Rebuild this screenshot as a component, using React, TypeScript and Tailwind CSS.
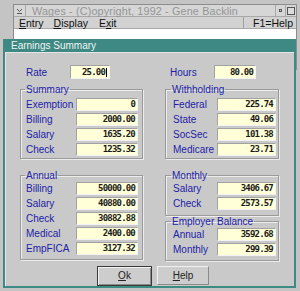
import React from "react";

const sans = "font-['Liberation_Sans',Arial,sans-serif]";
const lbl = "text-[10px] leading-[13px] text-[#2222a8]";

function Value({ value, w, h = 13, cursor = false }: { value: string; w: number; h?: number; cursor?: boolean }) {
  return (
    <div
      className="flex items-center justify-end bg-[#ffffd8] border border-t-[#a2a2a2] border-l-[#a2a2a2] border-b-[#f2f2f2] border-r-[#f2f2f2] pr-[2px] font-['DejaVu_Sans_Mono',monospace] font-bold text-[9px] tracking-[-0.8px] text-[#1a1a1a]"
      style={{ width: w, height: h }}
    >
      <span className="leading-none">{value}</span>
      {cursor && <span className="ml-[1px] h-[9px] w-[1px] bg-black" />}
    </div>
  );
}

function Row({ label, value, lw, iw, pl }: { label: string; value: string; lw: number; iw: number; pl: number }) {
  return (
    <div className="flex items-center h-[13px]">
      <div className={lbl} style={{ width: lw, paddingLeft: pl }}>{label}</div>
      <Value value={value} w={iw} />
    </div>
  );
}

function Group({
  title, rows, side, pt, pb, className = "",
}: {
  title: string; rows: [string, string][]; side: "l" | "r"; pt: number; pb: number; className?: string;
}) {
  const left = side === "l";
  return (
    <fieldset
      className={`border border-[#9a9a9a] shadow-[inset_1px_1px_0_#ececec,1px_1px_0_#ececec] ${className}`}
      style={{ paddingTop: pt, paddingBottom: pb }}
    >
      <legend className={`${lbl} leading-[12px] px-[1px] ${left ? "ml-[4px]" : "ml-[5px]"}`}>{title}</legend>
      <div className="flex flex-col gap-[2px]">
        {rows.map(([l, v]) => (
          <Row key={l} label={l} value={v} lw={left ? 55 : 51} iw={left ? 62 : 59} pl={left ? 5 : 7} />
        ))}
      </div>
    </fieldset>
  );
}

export default function App() {
  return (
    <div className={`relative w-[300px] h-[291px] overflow-hidden bg-[#c4c4c4] ${sans}`}>
      {/* Wages main window */}
      <div className="ml-[13px] mt-[4px] w-[284px] border border-[#8c8c8c] bg-[#d0d0d0]">
        <div className="flex items-center h-[12px] bg-[#d6d6d6] border-b border-[#a8a8a8]">
          <div className="w-[12px] h-full flex items-center justify-center border-r border-[#a8a8a8]">
            <svg width="7" height="6" viewBox="0 0 7 6">
              <path d="M1 1 L3.5 3.5 L6 1" fill="none" stroke="#555" strokeWidth="1" />
              <path d="M1 5.5 H6" stroke="#555" strokeWidth="1" />
            </svg>
          </div>
          <div className="ml-[6px] text-[10.8px] leading-[12px] tracking-[0.15px] text-[#959595] whitespace-nowrap">
            Wages - (C)opyright, 1992 - Gene Backlin
          </div>
          <div className="ml-auto h-full flex">
            <div className="w-[10px] h-full border-l border-[#a8a8a8] flex items-center justify-center">
              <div className="w-[3px] h-[3px] border border-[#555]" />
            </div>
            <div className="w-[11px] h-full border-l border-[#a8a8a8] flex items-center justify-center">
              <div className="w-[8px] h-[8px] border border-[#555] bg-[#dcdcdc]" />
            </div>
          </div>
        </div>
        <div className="flex items-center h-[12px] text-[10.5px] leading-[12px] text-[#111] bg-[#d2d2d2] border-b border-[#a8a8a8]">
          <span className="ml-[5px]"><u>E</u>ntry</span>
          <span className="ml-[10px]"><u>D</u>isplay</span>
          <span className="ml-[11px]">E<u>x</u>it</span>
          <div className="ml-auto h-full border-l border-[#a0a0a0] pl-[9px] pr-[3px]">F1=Help</div>
        </div>
        <div className="h-[40px] bg-white" />
      </div>

      {/* Earnings Summary dialog */}
      <div className="absolute left-[3px] top-[39px] w-[293px] h-[249px] bg-[#3e8983] px-[2px] pb-[2px] flex flex-col">
        <div className="h-[13px] flex items-center pl-[6px] text-[10px] leading-[13px] text-[#eef4f3] whitespace-nowrap">
          Earnings Summary
        </div>
        <div className="flex-1 bg-[#c9c9c9] border-l border-t border-[#e6e6e6] flex flex-col pl-[14px] pt-[12px]">
          <div className="flex gap-[22px]">
            {/* left column */}
            <div className="w-[123px] flex flex-col">
              <div className="flex items-center h-[14px]">
                <div className={`${lbl} w-[50px] pl-[6px]`}>Rate</div>
                <Value value="25.00" w={40} h={14} cursor />
              </div>
              <Group
                title="Summary" side="l" pt={2} pb={2} className="mt-[4px]"
                rows={[["Exemption", "0"], ["Billing", "2000.00"], ["Salary", "1635.20"], ["Check", "1235.32"]]}
              />
              <Group
                title="Annual" side="l" pt={0} pb={4} className="mt-[10px]"
                rows={[["Billing", "50000.00"], ["Salary", "40880.00"], ["Check", "30882.88"], ["Medical", "2400.00"], ["EmpFICA", "3127.32"]]}
              />
            </div>
            {/* right column */}
            <div className="w-[114px] flex flex-col">
              <div className="flex items-center h-[14px]">
                <div className={`${lbl} w-[49px] pl-[5px]`}>Hours</div>
                <Value value="80.00" w={42} h={14} />
              </div>
              <Group
                title="Withholding" side="r" pt={2} pb={2} className="mt-[4px]"
                rows={[["Federal", "225.74"], ["State", "49.06"], ["SocSec", "101.38"], ["Medicare", "23.71"]]}
              />
              <Group
                title="Monthly" side="r" pt={0} pb={5} className="mt-[10px]"
                rows={[["Salary", "3406.67"], ["Check", "2573.57"]]}
              />
              <Group
                title="Employer Balance" side="r" pt={0} pb={4} className="-mt-[1px]"
                rows={[["Annual", "3592.68"], ["Monthly", "299.39"]]}
              />
            </div>
          </div>
          <div className="flex items-start mt-[5px] ml-[77px] gap-[5px] text-[10px] text-[#222]">
            <button className="w-[55px] h-[20px] border border-[#3a3a3a] bg-[#cdcdcd] shadow-[inset_1px_1px_0_#f2f2f2,inset_-1px_-1px_0_#8a8a8a] flex items-center justify-center leading-none">
              <span><u>O</u>k</span>
            </button>
            <button className="w-[52px] h-[19px] border border-t-[#f0f0f0] border-l-[#f0f0f0] border-b-[#8a8a8a] border-r-[#8a8a8a] bg-[#cdcdcd] flex items-center justify-center leading-none">
              <span><u>H</u>elp</span>
            </button>
          </div>
        </div>
      </div>
    </div>
  );
}
